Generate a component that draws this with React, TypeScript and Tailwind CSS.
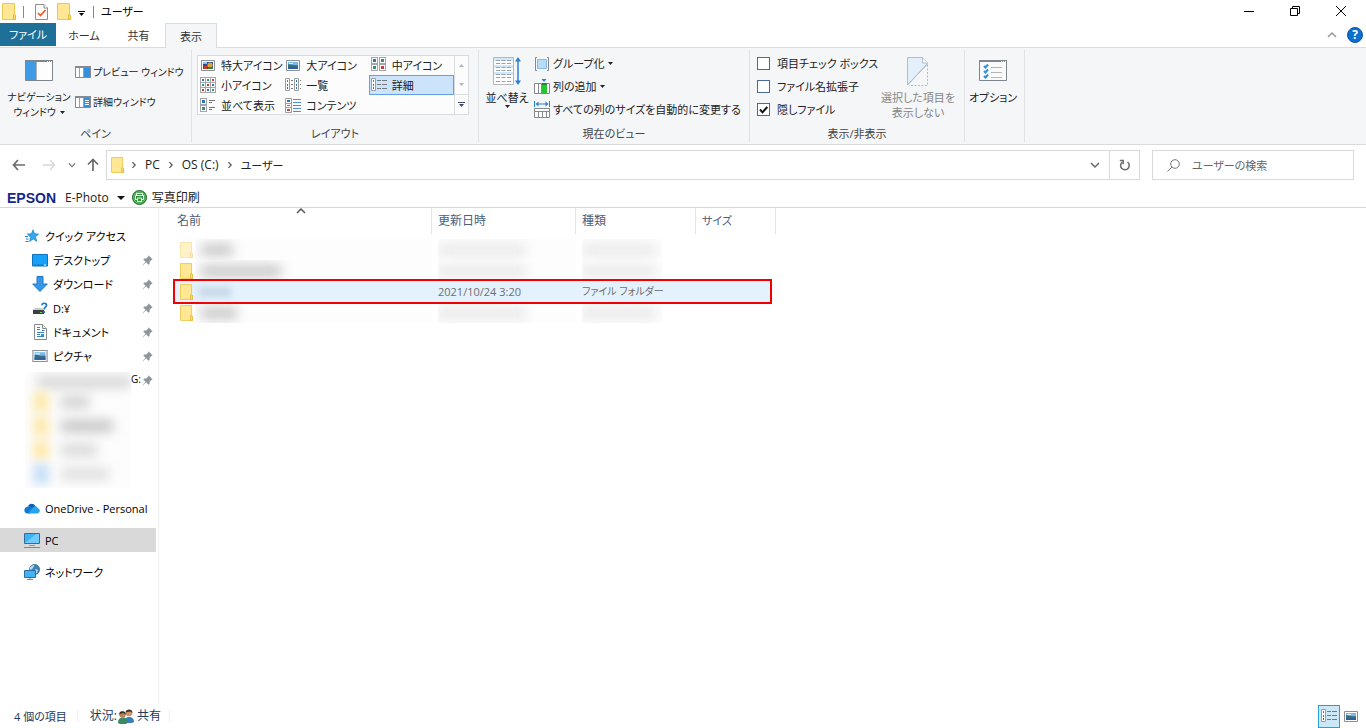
import React from "react";

type P = { className?: string };
type Kids = { children: React.ReactNode };

const Folder = ({ className = "h-[17px] w-[14px]" }: P) => (
  <svg viewBox="0 0 14 17" className={`shrink-0 ${className}`} aria-hidden="true">
    <path d="M.5.5h12v11l1 .8v4.2H.5z" fill="#ffe794" stroke="#edc851" />
    <path d="M11.5 16.5v-5h1l1 .8v4.2z" fill="#ffdf70" stroke="#e3b63a" strokeWidth=".9" />
  </svg>
);

const Caret = ({ className = "text-[#222]" }: P) => (
  <svg viewBox="0 0 5 3" className={`h-[3px] w-[5px] shrink-0 ${className}`} aria-hidden="true">
    <path d="M0 0h5L2.5 3z" fill="currentColor" />
  </svg>
);

const DocCheck = () => (
  <svg viewBox="0 0 13 16" className="h-4 w-[13px]" aria-hidden="true">
    <path d="M.5.5h8.5l3.5 3.5v11.5H.5z" fill="#fafafa" stroke="#8e8e8e" />
    <path d="M9 .5V4h3.5" fill="#fff" stroke="#8e8e8e" />
    <path d="M3 9l2.5 2.5L10.5 6" fill="none" stroke="#ee5a24" strokeWidth="1.7" />
  </svg>
);

const NavPane = () => (
  <svg viewBox="0 0 28 21" className="h-[21px] w-7" aria-hidden="true">
    <path d="M.5.5h27v20H.5z" fill="#fdfdfd" stroke="#7f858c" />
    <path d="M0 0h28v2H0z" fill="#7f858c" />
    <path d="M22 1h1v1h-1zM24 1h1v1h-1zM26 1h1v1h-1z" fill="#fff" />
    <path d="M1 2h10v18H1z" fill="#3f9be6" />
    <path d="M11 2h1v18h-1z" fill="#a9b0b6" />
  </svg>
);

const PreviewPane = ({ detail = false }: { detail?: boolean }) => (
  <svg viewBox="0 0 16 12" className="h-3 w-4 shrink-0" aria-hidden="true">
    <path d="M.5.5h15v11H.5z" fill="#fff" stroke="#858a90" />
    <path d="M0 0h16v2H0z" fill="#858a90" />
    <path d="M4.500 2v9M8.500 2v9" stroke="#9da2a7" />
    <path d="M9 2h6v9H9z" fill="#3390df" />
    {detail && <path d="M10 4.500h4M10 6.500h4M10 8.500h4" stroke="#fff" />}
  </svg>
);

const Photo = ({ className = "h-[11px] w-[14px]" }: P) => (
  <svg viewBox="0 0 14 11" className={`shrink-0 ${className}`} aria-hidden="true">
    <path d="M.5.5h13v10H.5z" fill="#fff" stroke="#8a8f94" />
    <path d="M2 2h10v7H2z" fill="#79b9ee" />
    <path d="M2 4.500C5 3.500 7 6 12 5v4H2z" fill="#3a6f80" />
    <path d="M2 7.500c4-.8 7 .2 10-.5v2H2z" fill="#2e5ea0" />
    <path d="M3 3h4v1H3z" fill="#e4f3fd" />
  </svg>
);

const PhotoXL = () => (
  <svg viewBox="0 0 14 11" className="h-[11px] w-[14px]" aria-hidden="true">
    <path d="M.5.5h13v10H.5z" fill="#fff" stroke="#8a8f94" />
    <path d="M2 2h10v7H2z" fill="#244f9e" />
    <path d="M2 2h4v2H2z" fill="#8cc1ee" />
    <circle cx="9" cy="5" r="2.600" fill="#e0a52c" />
    <path d="M3 6h3v3H3z" fill="#c43d30" />
    <path d="M7 7h5v2H7z" fill="#3d7d38" />
  </svg>
);

const Tiles = ({ xs, ys, size, dot, lines }: { xs: number[]; ys: number[]; size: number; dot: number; lines?: string }) => (
  <svg viewBox="0 0 16 16" className="h-4 w-4 shrink-0" aria-hidden="true">
    {ys.flatMap((y, row) =>
      xs.map((x, col) => (
        <g key={`${x}-${y}`}>
          <rect x={x + 0.5} y={y + 0.5} width={size - 1} height={size - 1} fill="#fff" stroke="#a3a7ab" />
          <rect
            x={x + 2}
            y={y + 2}
            width={dot}
            height={dot}
            fill={["#2e72b8", "#3b8f72", "#c5402c"][(row + col) % 3]}
          />
        </g>
      )),
    )}
    {lines && <path d={lines} stroke="#6f7479" fill="none" />}
  </svg>
);

const MediumIcon = () => <Tiles size={7} dot={3} xs={[0, 8]} ys={[0, 7]} />;
const SmallIcon = () => <Tiles size={6} dot={2} xs={[0, 5, 10]} ys={[0, 5, 10]} />;
const TilesIcon = () => <Tiles size={7} dot={3} xs={[0]} ys={[1, 8]} lines="M9 3.500h6M9 5.500h3M9 10.500h6M9 12.500h3" />;

const ListRows = ({ second = false }: { second?: boolean }) => (
  <svg viewBox="0 0 16 14" className="h-3.5 w-4 shrink-0" aria-hidden="true">
    <path d="M.5.5h4v12h-4z" fill="#fff" stroke="#9a9ea3" />
    <path d="M2 2h1v2H2z" fill="#2e9a8c" />
    <path d="M2 6h1v2H2z" fill="#2e72d8" />
    <path d="M2 9h1v2H2z" fill="#d03030" />
    {second ? (
      <>
        <path d="M9.500.5h4v12h-4z" fill="#fff" stroke="#9a9ea3" />
        <path d="M11 2h1v2h-1zM11 6h1v2h-1zM11 9h1v2h-1z" fill="#2e72b8" />
        <path d="M6 2.500h2M6 6.500h2M6 10.500h2M15 2.500h1M15 6.500h1M15 10.500h1" stroke="#777" />
      </>
    ) : (
      <path d="M6 2.500h4M11 2.500h5M6 6.500h4M11 6.500h5M6 10.500h4M11 10.500h5" stroke="#74797e" />
    )}
  </svg>
);
const ContentIcon = () => (
  <svg viewBox="0 0 16 15" className="h-[15px] w-4 shrink-0" aria-hidden="true">
    <path d="M.5.5h6v14h-6zM.5 5.500h6M.5 9.500h6" fill="#fff" stroke="#9a9ea3" />
    <path d="M2 2h3v2H2z" fill="#2e72b8" />
    <path d="M2 7h3v1H2z" fill="#4b8b5c" />
    <path d="M2 11h3v2H2z" fill="#c54a33" />
    <path d="M8 1.500h8M8 4.500h8M8 10.500h8M8 13.500h8" stroke="#4d8fdc" />
    <path d="M8 7.500h8" stroke="#7d8287" />
  </svg>
);

const SortIcon = () => (
  <svg viewBox="0 0 28 28" className="h-7 w-7" aria-hidden="true">
    <path d="M.5.500h20v27H.5z" fill="#fdfdfd" stroke="#b4b9be" />
    <path d="M1 1h19v3H1zM1 8h19v3H1zM1 15h19v3H1z" fill="#cfe9f8" />
    <path d="M3 3.500h15M3 6.500h15M3 10.500h15M3 13.500h15M3 17.500h15M3 20.500h15M3 24.500h15" stroke="#9aa1a8" strokeDasharray="4 1.500" />
    <path d="M25 2v24" stroke="#2a82cf" strokeWidth="1.500" />
    <path d="M25 0l3 4.500h-6zM25 28l3-4.500h-6z" fill="#2a82cf" />
  </svg>
);
const GroupIcon = () => (
  <svg viewBox="0 0 16 14" className="h-3.5 w-4 shrink-0" aria-hidden="true">
    <path d="M3 .5H1.500v13H3M13 .5h1.500v13H13" fill="none" stroke="#858a90" />
    <path d="M3.500 2.500h9v9h-9z" fill="#b7dcf8" stroke="#8cbce6" />
  </svg>
);
const AddColumnIcon = () => (
  <svg viewBox="0 0 16 16" className="h-4 w-4 shrink-0" aria-hidden="true">
    <path d="M7.500 0h5L10 3z" fill="#2a82cf" />
    <path d="M.5 4.500h15v10H.5zM4.500 4.500v10M7.500 4.500v10" fill="#fff" stroke="#858a90" />
    <path d="M8 4h5v11H8z" fill="#22c532" />
    <path d="M8 4h5v2H8z" fill="#238834" />
  </svg>
);
const FitColumnsIcon = () => (
  <svg viewBox="0 0 16 17" className="h-[17px] w-4 shrink-0" aria-hidden="true">
    <path d="M.5 0v6M15.500 0v6M3 3h10" stroke="#2a82cf" />
    <path d="M1.500 3l3-2.500v5zM14.500 3l-3-2.500v5z" fill="#2a82cf" />
    <path d="M.5 7.500h15v9H.5zM.5 10.500h15M4.500 10.500v6M8.500 10.500v6M12.500 10.500v6" fill="#fff" stroke="#858a90" />
  </svg>
);
const HideIcon = () => (
  <svg viewBox="0 0 22 29" className="h-[29px] w-[22px]" aria-hidden="true">
    <path d="M.5.5h15l5 5v1L.5 28z" fill="#e3f0fb" stroke="#b3bcc8" />
    <path d="M15.500.5v5.500h5.500" fill="#f5fafe" stroke="#b3bcc8" />
    <path d="M20.500 8v20.500H2" fill="none" stroke="#b3bcc8" strokeDasharray="2 1.500" />
    <path d="M1 27.500L20.500 7" stroke="#a4bddb" />
  </svg>
);
const OptionsIcon = () => (
  <svg viewBox="0 0 28 22" className="h-[22px] w-7" aria-hidden="true">
    <path d="M.5.5h27v20H.5z" fill="#fafafa" stroke="#7f858c" />
    <path d="M0 0h28v2H0z" fill="#7f858c" />
    <path d="M22 1h1v1h-1zM24 1h1v1h-1zM26 1h1v1h-1z" fill="#fff" />
    <path d="M5 6l1.500 1.500L9 4.500M5 11l1.500 1.500L9 9.500M5 16l1.500 1.500L9 14.500" stroke="#2f8fe0" fill="none" strokeWidth="2" />
    <path d="M12 7.500h11M12 12.500h11M12 17.500h11" stroke="#b1b6ba" />
  </svg>
);

const Pin = () => (
  <svg viewBox="0 0 11 11" className="h-[11px] w-[11px] shrink-0" aria-hidden="true">
    <path d="M6.500.3l4.200 4.200-1.300.5-1.900 2 .1 1.900-1.100.8-2.400-2.400L.6 10.500l-.2-.2L3.500 6.700 1.300 4.500l.9-1 1.900.1 2-1.900z" fill="#8d969f" />
  </svg>
);
const Star = () => (
  <svg viewBox="0 0 14 14" className="h-3.5 w-3.5 shrink-0" aria-hidden="true">
    <path d="M8 .8l1.600 4 4 .3-3.100 2.600 1.200 4.600-3.500-2.400-3.600 2.600 1-4.300L2.300 5l4.100-.2z" fill="#35a8ee" stroke="#1780c8" strokeWidth=".7" />
    <path d="M0 7.500h3M1 10h2.500M.5 12.500h3" stroke="#1780c8" />
  </svg>
);
const Desktop = () => (
  <svg viewBox="0 0 16 13" className="h-[13px] w-4 shrink-0" aria-hidden="true">
    <path d="M.5.5h15v11.500H.5z" fill="#17a1f8" stroke="#0d73bd" />
    <path d="M2 11h2M5 11h6" stroke="#0d73bd" />
    <path d="M12 11h2" stroke="#fff" />
  </svg>
);
const Download = () => (
  <svg viewBox="0 0 16 16" className="h-4 w-4 shrink-0" aria-hidden="true">
    <path d="M5 .5h6V8h4.300L8 15.500.7 8H5z" fill="#3596ea" stroke="#2277c5" />
  </svg>
);
const Drive = () => (
  <svg viewBox="0 0 16 13" className="h-[13px] w-4 shrink-0" aria-hidden="true">
    <path d="M3 6h7l2 2H1z" fill="#c9cccf" />
    <path d="M1 8h11v4H1z" fill="#3c4043" />
    <path d="M8 10h2v1H8z" fill="#5bdc6a" />
    <path d="M10 3.300C10 .6 14.500.6 14.500 3.200c0 2-2.400 2-2.400 4.300M12.100 9v2" fill="none" stroke="#1a77c9" strokeWidth="1.700" />
  </svg>
);
const Documents = () => (
  <svg viewBox="0 0 13 16" className="h-4 w-[13px] shrink-0" aria-hidden="true">
    <path d="M.5.5h8l4 4v11H.5z" fill="#fff" stroke="#868b90" />
    <path d="M8.500.5v4h4" fill="#eee" stroke="#868b90" />
    <path d="M3 3.500h3M3 5.500h3M8 6.500h2.500M3 8.500h7M3 10.500h3M3 12.500h7" stroke="#3185c6" />
    <path d="M7 10h3v2H7z" fill="#2e9abf" />
  </svg>
);
const Cloud = () => (
  <svg viewBox="0 0 16 11" className="h-[11px] w-4 shrink-0" aria-hidden="true">
    <path d="M4.200 3C5.500.2 10 0 11.500 3.400l-4 4.200z" fill="#0b61b5" />
    <path d="M3.500 10.500C-.7 10.300-.8 4 3.800 3.400c2-.3 3 .6 5.200 2L6 10.500z" fill="#0f7bd3" />
    <path d="M8.500 5C10.500 2.500 13 3 13.500 5 16.500 5.500 16.700 10.200 13 10.500H4z" fill="#28a3ea" />
  </svg>
);
const Pc = () => (
  <svg viewBox="0 0 16 16" className="h-4 w-4 shrink-0" aria-hidden="true">
    <path d="M.5 1.500h15v10H.5z" fill="#3fb1f5" stroke="#336f9d" />
    <path d="M1 11L12 2h3v9z" fill="#6fcbff" />
    <path d="M5 13h6v1H5z" fill="#8799a6" />
    <path d="M0 15h16v1H0z" fill="#6e8ca4" />
  </svg>
);
const Network = () => (
  <svg viewBox="0 0 16 16" className="h-4 w-4 shrink-0" aria-hidden="true">
    <circle cx="10.500" cy="5.500" r="5" fill="#3d83b4" stroke="#39779f" />
    <path d="M5.500 5C6 2 8 1 10.500 1L9 4 7 6zM9 7l3-2 2 1-1 3h-3z" fill="#b4d9ee" />
    <path d="M.5 6.500h11v7H.5z" fill="#42b2f4" stroke="#2a719f" />
    <path d="M3 15.500h6M6 14v1" stroke="#6e8ca4" />
  </svg>
);
const Printer = () => (
  <svg viewBox="0 0 15 15" className="h-[15px] w-[15px] shrink-0" aria-hidden="true">
    <circle cx="7.500" cy="7.500" r="7" fill="#2c9637" stroke="#1d6b28" />
    <circle cx="7.500" cy="7.500" r="5.700" fill="none" stroke="#a5dcaa" strokeWidth=".7" />
    <path d="M4.500 5V3.500h6V5M3.500 5.500h8v4h-8z" fill="none" stroke="#fff" />
    <path d="M5.500 8h4v3.500h-4z" fill="#2c9637" stroke="#fff" />
  </svg>
);
const People = () => (
  <svg viewBox="0 0 16 15" className="h-[15px] w-4 shrink-0" aria-hidden="true">
    <path d="M7 14c0-5 1.500-6 4-6 3 0 5 1.500 5 5l-2 1z" fill="#3a7dbd" />
    <circle cx="11" cy="4" r="3.300" fill="#c99672" />
    <path d="M7.500 3.500C8-.5 14.500-.5 14.500 4L12 2.500z" fill="#4a3427" />
    <path d="M0 14c0-4 2-5.500 5-5.500s5 1.500 5 5L8 15H2z" fill="#3c8a64" />
    <circle cx="4.500" cy="5.500" r="3.200" fill="#b98361" />
    <path d="M1 5.500C1 1 8 1 8 5.500L5 4z" fill="#3d2e28" />
  </svg>
);

const Chevron = ({ d, className }: { d: string; className: string }) => (
  <svg viewBox="0 0 10 10" className={`shrink-0 ${className}`} aria-hidden="true">
    <path d={d} fill="none" stroke="currentColor" strokeWidth="1.500" />
  </svg>
);
const RIGHT = "M3 1.500L6.500 5 3 8.500";
const DOWN = "M1 3l4 4 4-4";
const UP = "M1 7l4-4 4 4";

const Group = ({ label, className, children }: Kids & { label: string; className: string }) => (
  <section aria-label={label} className={`flex shrink-0 flex-col border-r border-[#dfe2e5] ${className}`}>
    <div className="flex h-[76px]">{children}</div>
    <div className="text-center text-[#444]">{label}</div>
  </section>
);

const GalleryItem = ({ icon, children, active }: Kids & { icon: React.ReactNode; active?: boolean }) => (
  <button
    className={`flex h-5 items-center gap-[5px] border pl-px text-left whitespace-nowrap ${
      active ? "border-[#62a2e4] bg-[#cce4fb]" : "border-transparent"
    }`}
  >
    <span className="flex w-4 shrink-0 justify-center">{icon}</span>
    <span>{children}</span>
  </button>
);

const Check = ({ id, label, defaultChecked }: { id: string; label: string; defaultChecked?: boolean }) => (
  <div className="flex h-[23px] items-center gap-[7px]">
    <span className="relative flex h-[13px] w-[13px]">
      <input
        id={id}
        type="checkbox"
        defaultChecked={defaultChecked}
        className="peer h-[13px] w-[13px] appearance-none border border-[#4d6a97] bg-white"
      />
      <svg viewBox="0 0 13 13" className="pointer-events-none absolute inset-0 hidden peer-checked:block" aria-hidden="true">
        <path d="M3 6.500l2.500 2.800L10.300 4" fill="none" stroke="#111" strokeWidth="2" />
      </svg>
    </span>
    <label htmlFor={id} className="whitespace-nowrap">{label}</label>
  </div>
);

const SideItem = ({ icon, children, nested, pinned, selected }: Kids & { icon: React.ReactNode; nested?: boolean; pinned?: boolean; selected?: boolean }) => (
  <li>
    <a
      href="#"
      className={`mr-0.5 flex h-6 items-center gap-[5px] pr-[3px] whitespace-nowrap ${nested ? "pl-8" : "pl-6"} ${selected ? "bg-[#d9d9d9]" : ""}`}
    >
      <span className="flex w-4 shrink-0 justify-center">{icon}</span>
      <span className="flex-1">{children}</span>
      {pinned && <Pin />}
    </a>
  </li>
);

const hiddenFolders = [
  { icon: "bg-[#fdeab0]", text: "w-7 bg-[#cfcfcf]" },
  { icon: "bg-[#fdeab0]", text: "w-13 bg-[#c4c4c4]" },
  { icon: "bg-[#fdeab0]", text: "w-9 bg-[#d8d8d8]" },
  { icon: "bg-[#c8e0f8]", text: "w-12 bg-[#dedede]" },
];

const rows = [
  { faded: true, blob: "w-8" },
  { blob: "w-20" },
  { selected: true, blob: "w-8", date: "2021/10/24 3:20", kind: "ファイル フォルダー" },
  { blob: "w-9" },
];

const Smudge = ({ className }: { className: string }) => (
  <div className="flex h-[21px] items-center overflow-hidden bg-[#fdfdfd]">
    <div className={`h-3 blur-[6px] ${className}`} />
  </div>
);

export default function App() {
  return (
    <div className="flex min-h-screen flex-col bg-white font-['Open_Sans','Noto_Sans_CJK_JP',sans-serif] text-[11px] leading-[15px] text-[#222] [font-feature-settings:'palt']">
      <header>
        <div className="flex h-[23px] items-center justify-between">
          <div className="flex items-center pl-0.5 text-black">
            <Folder />
            <span className="ml-[7px] h-3 w-px bg-[#888]" />
            <button aria-label="プロパティ" className="ml-[11px]"><DocCheck /></button>
            <button aria-label="新しいフォルダー" className="ml-[9px]"><Folder /></button>
            <button aria-label="クイック アクセスのカスタマイズ" className="ml-[7px] flex flex-col items-center gap-px pt-1">
              <span className="h-px w-[7px] bg-black" />
              <Caret className="text-black" />
            </button>
            <span className="ml-2 h-3 w-px bg-[#888]" />
            <h1 className="ml-[7px]">ユーザー</h1>
          </div>
          <div className="flex pr-0.5">
            <button aria-label="最小化" className="flex h-[21px] w-[46px] items-center justify-center">
              <span className="h-px w-2.5 bg-black" />
            </button>
            <button aria-label="元に戻す" className="flex h-5 w-[46px] items-center justify-center">
              <svg viewBox="0 0 10 10" className="h-2.5 w-2.5" fill="none" stroke="#000"><path d="M.5 2.500h7v7h-7zM2.500 2.500v-2h7v7h-2" /></svg>
            </button>
            <button aria-label="閉じる" className="flex h-5 w-[46px] items-center justify-center">
              <svg viewBox="0 0 10 10" className="h-2.5 w-2.5" stroke="#000"><path d="M0 0l10 10M10 0L0 10" /></svg>
            </button>
          </div>
        </div>

        <div className="flex h-[25px] items-stretch border-b border-[#dadbdc] text-[#333]">
          <button className="mb-px w-14 bg-[#1f7099] text-white">ファイル</button>
          <button className="w-14">ホーム</button>
          <button className="w-[53px]">共有</button>
          <button className="-mb-px w-[52px] border border-b-0 border-[#dadbdc] bg-[#f4f6f8]">表示</button>
          <div className="ml-auto flex items-center gap-2.5 pr-[3px]">
            <button aria-label="リボンの最小化" className="text-[#999]"><Chevron d={UP} className="h-2.5 w-2.5" /></button>
            <button aria-label="ヘルプ" className="flex h-4 w-4 items-center justify-center rounded-full border border-[#0b559f] bg-[#0b6fcf] text-xs font-bold text-white">?</button>
          </div>
        </div>

        <div className="flex h-[97px] border-b border-[#dadbdc] bg-[#f4f6f8] py-0.5">
          <Group label="ペイン" className="w-48">
            <button className="flex w-[78px] shrink-0 flex-col items-center pt-2.5">
              <NavPane />
              <span className="mt-[9px] text-[10px]">ナビゲーション</span>
              <span className="flex items-center gap-1 text-[10px]">ウィンドウ<Caret /></span>
            </button>
            <div className="-ml-[3px] flex flex-col pt-[7px] whitespace-nowrap">
              <button className="flex h-[30px] items-center gap-0.5 text-[10px]"><PreviewPane />プレビュー ウィンドウ</button>
              <button className="flex h-[30px] items-center gap-0.5 text-[10px]"><PreviewPane detail />詳細ウィンドウ</button>
            </div>
          </Group>

          <Group label="レイアウト" className="w-[287px]">
            <div className="mt-[5px] ml-[5px] flex h-[60px] w-[272px] border border-[#d9dcdf] bg-[#fcfcfc]">
              <div className="-mt-px grid flex-1 grid-cols-3 content-start">
                <GalleryItem icon={<PhotoXL />}>特大アイコン</GalleryItem>
                <GalleryItem icon={<Photo />}>大アイコン</GalleryItem>
                <GalleryItem icon={<MediumIcon />}>中アイコン</GalleryItem>
                <GalleryItem icon={<SmallIcon />}>小アイコン</GalleryItem>
                <GalleryItem icon={<ListRows second />}>一覧</GalleryItem>
                <GalleryItem icon={<ListRows />} active>詳細</GalleryItem>
                <GalleryItem icon={<TilesIcon />}>並べて表示</GalleryItem>
                <GalleryItem icon={<ContentIcon />}>コンテンツ</GalleryItem>
              </div>
              <div className="flex w-3.5 flex-col border-l border-[#d9dcdf]">
                <button aria-label="上へ" className="flex flex-1 rotate-180 items-center justify-center"><Caret className="text-[#b0b6bb]" /></button>
                <button aria-label="下へ" className="flex flex-1 items-center justify-center"><Caret className="text-[#b0b6bb]" /></button>
                <button aria-label="その他" className="flex flex-1 flex-col items-center justify-center gap-px border-t border-[#d9dcdf] text-[#3b4a6b]">
                  <span className="h-px w-[7px] bg-current" />
                  <Caret className="text-current" />
                </button>
              </div>
            </div>
          </Group>

          <Group label="現在のビュー" className="w-[271px]">
            <button className="flex w-14 shrink-0 flex-col items-center pt-[7px]">
              <SortIcon />
              <span className="mt-[5px]">並べ替え</span>
              <Caret />
            </button>
            <div className="-ml-px flex flex-col pt-0.5 whitespace-nowrap">
              <button className="flex h-[23px] items-center gap-[3px]"><GroupIcon />グループ化<Caret /></button>
              <button className="flex h-[23px] items-center gap-[3px]"><AddColumnIcon />列の追加<Caret /></button>
              <button className="flex h-[23px] items-center gap-[3px]"><FitColumnsIcon />すべての列のサイズを自動的に変更する</button>
            </div>
          </Group>

          <Group label="表示/非表示" className="w-[215px]">
            <div className="w-[126px] pt-0.5 pl-[7px]">
              <Check id="item-check" label="項目チェック ボックス" />
              <Check id="extensions" label="ファイル名拡張子" />
              <Check id="hidden-files" label="隠しファイル" defaultChecked />
            </div>
            <button disabled className="flex w-[84px] shrink-0 flex-col items-center pt-[7px] text-[#868686]">
              <HideIcon />
              <span className="mt-1">選択した項目を</span>
              <span>表示しない</span>
            </button>
          </Group>

          <section aria-label="オプション" className="w-[60px] shrink-0 border-r border-[#dfe2e5]">
            <button className="flex w-full flex-col items-center pt-2.5 pr-[3px]">
              <OptionsIcon />
              <span className="mt-2">オプション</span>
            </button>
          </section>
        </div>
      </header>

      <div className="flex h-10 items-center pr-3">
        <div className="flex w-[106px] shrink-0 items-center text-[#555]">
          <button aria-label="戻る" className="ml-3"><svg viewBox="0 0 14 12" className="h-3 w-3.5" fill="none" stroke="#6a6a6a" strokeWidth="1.700"><path d="M6 1L1.500 6 6 11M1.500 6H13" /></svg></button>
          <button aria-label="進む" className="ml-4"><svg viewBox="0 0 14 12" className="h-3 w-3.5" fill="none" stroke="#d8d8d8" strokeWidth="1.500"><path d="M8 1l4.500 5L8 11M12.500 6H1" /></svg></button>
          <button aria-label="最近表示した場所" className="ml-3 text-[#777]"><Chevron d={DOWN} className="h-2 w-2" /></button>
          <button aria-label="上へ" className="ml-[11px]"><svg viewBox="0 0 12 14" className="h-3.5 w-3" fill="none" stroke="#6a6a6a" strokeWidth="1.700"><path d="M1 6.500L6 1.500l5 5M6 1.500V13" /></svg></button>
        </div>
        <nav aria-label="アドレス" className="flex h-[30px] flex-1 items-center border border-[#d9d9d9] pl-1">
          <Folder className="mr-1.5 h-4 w-[13px]" />
          <Chevron d={RIGHT} className="h-2 w-2 text-[#555]" />
          <a href="#" className="mx-1.5 px-px text-xs">PC</a>
          <Chevron d={RIGHT} className="h-2 w-2 text-[#555]" />
          <a href="#" className="mx-1.5 px-px text-xs">OS (C:)</a>
          <Chevron d={RIGHT} className="h-2 w-2 text-[#555]" />
          <a href="#" className="mx-1.5 px-px">ユーザー</a>
          <button aria-label="以前の場所" className="ml-auto flex h-full w-7 items-center justify-center text-[#666]"><Chevron d={DOWN} className="h-2.5 w-2.5" /></button>
          <button aria-label="最新の情報に更新" className="flex h-full w-[30px] items-center justify-center border-l border-[#d9d9d9]">
            <svg viewBox="0 0 12 12" className="h-3 w-3" fill="none" stroke="#6a6a6a" strokeWidth="1.500"><path d="M8.500 3A4.300 4.300 0 1 1 3 3.300M.8 1.500h3.400v3.700" /></svg>
          </button>
        </nav>
        <div className="ml-3 flex h-[30px] w-[202px] items-center border border-[#d9d9d9] pl-3.5">
          <svg viewBox="0 0 13 13" className="h-[13px] w-[13px] shrink-0" fill="none" stroke="#777"><circle cx="8" cy="5" r="4.300" /><path d="M5 8L.5 12.500" /></svg>
          <input type="search" aria-label="ユーザーの検索" placeholder="ユーザーの検索" className="ml-3 w-full min-w-0 bg-transparent outline-none placeholder:text-[#666]" />
        </div>
      </div>

      <div className="flex h-[23px] items-center border-b border-[#d5d7d9] pt-[3px] pl-[7px]">
        <span className="w-[51px] font-['Liberation_Sans',sans-serif] text-sm font-bold text-[#16278c]">EPSON</span>
        <button className="ml-[7px] flex items-center gap-2 text-xs">
          E-Photo
          <svg viewBox="0 0 8 4" className="h-1 w-2" aria-hidden="true"><path d="M0 0h8L4 4z" fill="#111" /></svg>
        </button>
        <button className="ml-[7px] flex items-center gap-[5px] text-xs"><Printer />写真印刷</button>
      </div>

      <div className="flex flex-1">
        <aside className="w-[159px] shrink-0 border-r border-[#f0f0f0] pt-4 text-black">
          <ul>
            <SideItem icon={<Star />}>クイック アクセス</SideItem>
            <SideItem nested pinned icon={<Desktop />}>デスクトップ</SideItem>
            <SideItem nested pinned icon={<Download />}>ダウンロード</SideItem>
            <SideItem nested pinned icon={<Drive />}>D:¥</SideItem>
            <SideItem nested pinned icon={<Documents />}>ドキュメント</SideItem>
            <SideItem nested pinned icon={<Photo className="h-3 w-4" />}>ピクチャ</SideItem>
          </ul>
          <div className="flex h-[120px] pt-1 pr-[5px] pl-[25px]">
            <div className="w-[106px] shrink-0 overflow-hidden bg-[#fdfdfd]">
              <div className="mt-1 mb-0.5 ml-3 h-3 bg-[#d6d6d6] blur-[6px]" />
              {hiddenFolders.map((f, i) => (
                <div key={i} className="flex h-6 items-center gap-3 pl-2">
                  <div className={`h-5 w-4 blur-[5px] ${f.icon}`} />
                  <div className={`h-3 blur-[6px] ${f.text}`} />
                </div>
              ))}
            </div>
            <span className="w-2 text-[10px]">G:</span>
            <span className="ml-auto pt-[3px]"><Pin /></span>
          </div>
          <ul className="mt-2 space-y-2">
            <SideItem icon={<Cloud />}>OneDrive - Personal</SideItem>
            <SideItem icon={<Pc />} selected>PC</SideItem>
            <SideItem icon={<Network />}>ネットワーク</SideItem>
          </ul>
        </aside>

        <main className="min-w-0 flex-1 pl-4">
          <table className="w-[601px] table-fixed border-separate border-spacing-0 text-left text-[#6d6d6d]">
            <colgroup>
              <col className="w-[257px]" />
              <col className="w-36" />
              <col className="w-[120px]" />
              <col className="w-[74px]" />
              <col className="w-1.5" />
            </colgroup>
            <thead>
              <tr className="h-[26px] text-xs text-[#4c607a]">
                <th className="relative border-r border-[#e5e5e5] pl-0.5 font-normal">
                  名前
                  <span className="absolute -top-0.5 left-[121px] text-[#555]"><Chevron d={UP} className="h-2.5 w-2.5" /></span>
                </th>
                <th className="border-r border-[#e5e5e5] pl-1.5 font-normal">更新日時</th>
                <th className="border-r border-[#e5e5e5] pl-1.5 font-normal">種類</th>
                <th colSpan={2} className="border-r border-[#e5e5e5] pl-1.5 text-[11px] font-normal">サイズ</th>
              </tr>
            </thead>
            <tbody>
              <tr className="h-[5px]"><td colSpan={5} className="p-0" /></tr>
              {rows.map((r, i) => (
                <tr key={i} className="h-[21px]">
                  <td className={`relative p-0 ${r.selected ? "z-10 bg-[#e4f2fe]" : ""}`}>
                    {r.selected && <div className="pointer-events-none absolute -top-0.5 -left-0.5 h-[25px] w-[599px] border-2 border-[#f00000]" />}
                    <div className="flex items-center pl-[5px]">
                      <Folder className={r.faded ? "h-4 w-[13px] opacity-50" : "h-4 w-[13px]"} />
                      {r.selected ? (
                        <div className={`ml-1.5 h-2.5 bg-[#c8d8e8] blur-[3px] ${r.blob}`} />
                      ) : (
                        <div className="ml-0.5 flex-1"><Smudge className={`ml-1.5 bg-[#c8c8c8] ${r.blob}`} /></div>
                      )}
                    </div>
                  </td>
                  <td className={`p-0 pl-1.5 ${r.selected ? "bg-[#e4f2fe]" : ""}`}>
                    {r.date ?? <Smudge className="w-[88px] bg-[#e9e9e9]" />}
                  </td>
                  <td className={`p-0 pl-1.5 text-[10px] whitespace-nowrap ${r.selected ? "bg-[#e4f2fe]" : ""}`}>
                    {r.kind ?? <div className="w-20"><Smudge className="w-[74px] bg-[#e9e9e9]" /></div>}
                  </td>
                  <td className={`p-0 ${r.selected ? "bg-[#e4f2fe]" : ""}`} />
                  <td className="p-0" />
                </tr>
              ))}
            </tbody>
          </table>
        </main>
      </div>

      <footer className="flex h-6 items-center pl-3.5 text-[#1e395b]">
        <span>4 個の項目</span>
        <span className="ml-2.5 h-3 w-px bg-[#eee]" />
        <span className="ml-3 flex items-center gap-px text-xs">状況:<People /><span className="ml-0.5">共有</span></span>
        <span className="ml-2 h-3 w-px bg-[#eee]" />
        <div className="ml-auto flex items-center gap-1 pr-2">
          <button aria-label="詳細表示" className="flex h-[23px] w-[22px] items-center justify-center border border-[#26a0da] bg-[#cce8f6]"><ListRows /></button>
          <button aria-label="大きい縮小版で表示"><Photo /></button>
        </div>
      </footer>
    </div>
  );
}
